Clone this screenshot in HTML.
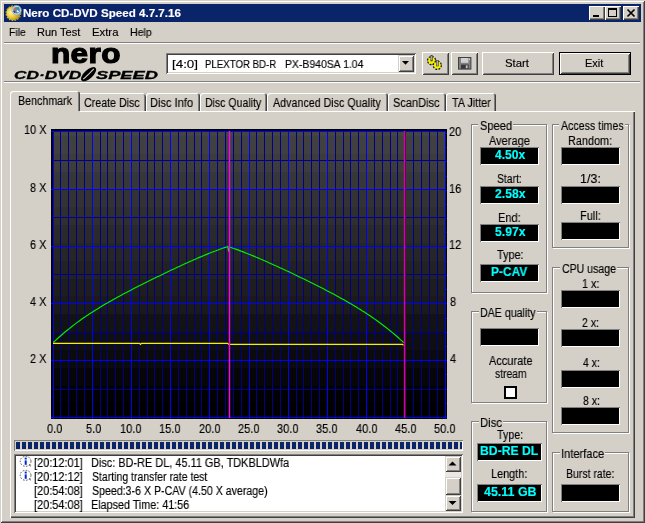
<!DOCTYPE html>
<html lang="en"><head><meta charset="utf-8"><title>Nero CD-DVD Speed 4.7.7.16</title>
<style>
html,body{margin:0;padding:0}
body{width:645px;height:523px;overflow:hidden;background:#d4d0c8;position:relative;font-family:"Liberation Sans",sans-serif;font-size:11px;color:#000}
.a{position:absolute;box-sizing:border-box}
.t{white-space:nowrap;height:16px;line-height:16px;transform-origin:0 50%;will-change:transform;-webkit-text-stroke:0.15px currentColor}
</style></head>
<body>
<div class="a " style="left:0px;top:0px;width:645px;height:523px;background:#d4d0c8;box-shadow:inset 1px 1px 0 #d4d0c8, inset -1px -1px 0 #404040, inset 2px 2px 0 #fff, inset -2px -2px 0 #808080"></div>
<div class="a " style="left:4px;top:4px;width:637px;height:18px;background:#0a246a"></div>
<svg class="a" style="left:5px;top:4px" width="18" height="18" viewBox="0 0 18 18">
<defs><radialGradient id="g1" cx="0.35" cy="0.45" r="0.7"><stop offset="0" stop-color="#fff8b0"/><stop offset="0.45" stop-color="#ecd040"/><stop offset="1" stop-color="#a88810"/></radialGradient></defs>
<circle cx="8.4" cy="9.2" r="7.3" fill="none" stroke="#d8b820" stroke-width="1.2" stroke-dasharray="1.6 1.3"/>
<circle cx="8.4" cy="9.2" r="7" fill="url(#g1)"/>
<circle cx="11.6" cy="6.3" r="4.7" fill="#d8dce4" stroke="#9098a8" stroke-width="0.7"/>
<circle cx="11.6" cy="6.3" r="3.3" fill="#2890e0"/>
<path d="M9.2 4.2 L12 6.6" stroke="#f06020" stroke-width="1.5"/>
<path d="M12 6.6 L13.6 8" stroke="#fff" stroke-width="1.5"/>
<path d="M8.8 7 L9.8 8.6" stroke="#a01010" stroke-width="1.4"/>
<path d="M12.6 3.6 L14 4.6" stroke="#30a030" stroke-width="1.3"/>
</svg>
<div class="a t" style="left:23px;top:5px;font-size:11px;transform:scaleX(1.0540);font-weight:bold;color:#fff;">Nero CD-DVD Speed 4.7.7.16</div>
<div class="a " style="left:589px;top:6px;width:16px;height:14px;background:#d4d0c8;box-shadow:inset 1px 1px 0 #fff, inset -1px -1px 0 #404040, inset -2px -2px 0 #808080"></div>
<div class="a " style="left:605px;top:6px;width:16px;height:14px;background:#d4d0c8;box-shadow:inset 1px 1px 0 #fff, inset -1px -1px 0 #404040, inset -2px -2px 0 #808080"></div>
<div class="a " style="left:623px;top:6px;width:16px;height:14px;background:#d4d0c8;box-shadow:inset 1px 1px 0 #fff, inset -1px -1px 0 #404040, inset -2px -2px 0 #808080"></div>
<div class="a " style="left:593px;top:15px;width:6px;height:2px;background:#000"></div>
<div class="a " style="left:608px;top:8px;width:9px;height:9px;border:1px solid #000;border-top:2px solid #000"></div>
<svg class="a" style="left:623px;top:6px" width="16" height="14" viewBox="0 0 16 14"><path d="M4.5 3.5 L11.5 10.5 M11.5 3.5 L4.5 10.5" stroke="#000" stroke-width="1.7" fill="none"/></svg>
<div class="a t" style="left:9px;top:24px;font-size:11px;transform:scaleX(0.9518);">File</div>
<div class="a t" style="left:37px;top:24px;font-size:11px;transform:scaleX(1.0001);">Run Test</div>
<div class="a t" style="left:92px;top:24px;font-size:11px;transform:scaleX(1.0298);">Extra</div>
<div class="a t" style="left:130px;top:24px;font-size:11px;transform:scaleX(0.9631);">Help</div>
<div class="a " style="left:4px;top:42px;width:636px;height:1px;background:#808080"></div>
<div class="a " style="left:4px;top:43px;width:636px;height:1px;background:#fff"></div>
<div class="a " style="left:4px;top:81px;width:636px;height:1px;background:#808080"></div>
<div class="a " style="left:4px;top:82px;width:636px;height:1px;background:#fff"></div>
<div class="a t" style="left:51.35px;top:33.12px;height:40px;line-height:40px;font-size:28.5px;font-weight:bold;transform:scaleX(1.1079);-webkit-text-stroke:1.2px #000;letter-spacing:0.3px;">nero</div>
<div class="a t" style="left:13.62px;top:54.69px;height:40px;line-height:40px;font-size:11px;font-weight:bold;font-style:italic;transform:scaleX(1.5704);-webkit-text-stroke:0.3px #000;">CD·DVD</div>
<div class="a t" style="left:96.42px;top:54.69px;height:40px;line-height:40px;font-size:11px;font-weight:bold;font-style:italic;transform:scaleX(1.6583);-webkit-text-stroke:0.3px #000;">SPEED</div>
<svg class="a" style="left:79px;top:66px" width="20" height="16" viewBox="0 0 20 16"><ellipse cx="9.6" cy="8.2" rx="9.4" ry="4.3" transform="rotate(-42 9.6 8.2)" fill="#000"/><path d="M4.2 13.2 Q8.5 9.5 14.8 2.8" stroke="#d4d0c8" stroke-width="1.1" fill="none"/></svg>
<div class="a " style="left:166px;top:53px;width:250px;height:21px;background:#fff;box-shadow:inset 1px 1px 0 #808080, inset -1px -1px 0 #fff, inset 2px 2px 0 #404040, inset -2px -2px 0 #d4d0c8"></div>
<div class="a" style="left:0;top:0">
<div class="a t" style="left:172px;top:56px;font-size:11px;transform:scaleX(1.2155);">[4:0]</div>
   
<div class="a t" style="left:205px;top:56px;font-size:11px;transform:scaleX(0.8777);">PLEXTOR BD-R</div>
   
<div class="a t" style="left:285px;top:56px;font-size:11px;transform:scaleX(0.9496);">PX-B940SA 1.04</div>
</div>
<div class="a " style="left:398px;top:55px;width:16px;height:17px;background:#d4d0c8;box-shadow:inset 1px 1px 0 #d4d0c8, inset -1px -1px 0 #404040, inset 2px 2px 0 #fff, inset -2px -2px 0 #808080"></div>
<svg class="a" style="left:398px;top:55px" width="16" height="17" viewBox="0 0 16 17"><path d="M4 6 L11 6 L7.5 9.8 Z" fill="#000"/></svg>
<div class="a " style="left:422px;top:52px;width:27px;height:23px;background:#d4d0c8;box-shadow:inset 1px 1px 0 #fff, inset -1px -1px 0 #404040, inset 2px 2px 0 #d4d0c8, inset -2px -2px 0 #808080"></div>
<div class="a " style="left:451px;top:52px;width:27px;height:23px;background:#d4d0c8;box-shadow:inset 1px 1px 0 #fff, inset -1px -1px 0 #404040, inset 2px 2px 0 #d4d0c8, inset -2px -2px 0 #808080"></div>
<svg class="a" style="left:424px;top:53px" width="24" height="21" viewBox="0 0 24 21">
<g fill="#f4f000" stroke="#181800" stroke-width="1.1"><circle cx="7.6" cy="7.6" r="3.6" stroke-dasharray="1.7 1.1" stroke-width="2.2"/><circle cx="7.6" cy="7.6" r="3.4" stroke="none"/>
<circle cx="13.3" cy="12.3" r="3.6" stroke-dasharray="1.7 1.1" stroke-width="2.2"/><circle cx="13.3" cy="12.3" r="3.4" stroke="none"/></g>
<rect x="6.8" y="2.4" width="1.8" height="5.6" fill="#b0b0b8" stroke="#404040" stroke-width="0.6"/>
<rect x="12.5" y="7.4" width="1.8" height="5.6" fill="#b0b0b8" stroke="#404040" stroke-width="0.6"/>
</svg>
<svg class="a" style="left:458px;top:57px" width="14" height="13" viewBox="0 0 14 13">
<rect x="0.5" y="0.5" width="12.4" height="11.6" fill="#808080" stroke="#404040"/>
<rect x="3" y="1" width="7.4" height="4.8" fill="#d0d0d0"/>
<rect x="3" y="7.6" width="7.6" height="4.2" fill="#383838"/>
<rect x="7.8" y="8.4" width="1.8" height="2.8" fill="#c8c8c8"/>
<rect x="11" y="1.6" width="1" height="1.4" fill="#d8d8d8"/>
</svg>
<div class="a " style="left:482px;top:52px;width:72px;height:23px;background:#d4d0c8;box-shadow:inset 1px 1px 0 #fff, inset -1px -1px 0 #404040, inset 2px 2px 0 #d4d0c8, inset -2px -2px 0 #808080"></div>
<div class="a t" style="left:505px;top:55px;font-size:11px;transform:scaleX(1.0346);">Start</div>
<div class="a " style="left:559px;top:52px;width:72px;height:23px;background:#000"></div>
<div class="a " style="left:560px;top:53px;width:70px;height:21px;background:#d4d0c8;box-shadow:inset 1px 1px 0 #fff, inset -1px -1px 0 #404040, inset 2px 2px 0 #d4d0c8, inset -2px -2px 0 #808080"></div>
<div class="a t" style="left:585px;top:55px;font-size:11px;transform:scaleX(0.9980);">Exit</div>
<div class="a " style="left:10px;top:111px;width:625px;height:407px;background:#d4d0c8;box-shadow:inset 1px 1px 0 #fff, inset -1px -1px 0 #404040, inset -2px -2px 0 #808080"></div>
<div class="a " style="left:10px;top:91px;width:70px;height:21px;background:#d4d0c8;border-radius:3px 3px 0 0;box-shadow:inset 1px 1px 0 #fff, inset -1px 0 0 #404040, inset -2px 0 0 #808080"></div>
<div class="a " style="left:11px;top:111px;width:69px;height:1px;background:#d4d0c8"></div>
<div class="a t" style="left:18px;top:93px;font-size:12.5px;transform:scaleX(0.8546);">Benchmark</div>
<div class="a " style="left:80px;top:93px;width:66px;height:18px;background:#d4d0c8;border-radius:0 3px 0 0;box-shadow:inset 0 1px 0 #fff, inset -1px 0 0 #404040, inset -2px 0 0 #808080"></div>
<div class="a t" style="left:84px;top:95px;font-size:12.5px;transform:scaleX(0.8528);">Create Disc</div>
<div class="a " style="left:146px;top:93px;width:54px;height:18px;background:#d4d0c8;border-radius:3px 3px 0 0;box-shadow:inset 1px 1px 0 #fff, inset -1px 0 0 #404040, inset -2px 0 0 #808080"></div>
<div class="a t" style="left:150px;top:95px;font-size:12.5px;transform:scaleX(0.8849);">Disc Info</div>
<div class="a " style="left:200px;top:93px;width:67px;height:18px;background:#d4d0c8;border-radius:3px 3px 0 0;box-shadow:inset 1px 1px 0 #fff, inset -1px 0 0 #404040, inset -2px 0 0 #808080"></div>
<div class="a t" style="left:205px;top:95px;font-size:12.5px;transform:scaleX(0.8419);">Disc Quality</div>
<div class="a " style="left:267px;top:93px;width:121px;height:18px;background:#d4d0c8;border-radius:3px 3px 0 0;box-shadow:inset 1px 1px 0 #fff, inset -1px 0 0 #404040, inset -2px 0 0 #808080"></div>
<div class="a t" style="left:273px;top:95px;font-size:12.5px;transform:scaleX(0.8573);">Advanced Disc Quality</div>
<div class="a " style="left:388px;top:93px;width:58px;height:18px;background:#d4d0c8;border-radius:3px 3px 0 0;box-shadow:inset 1px 1px 0 #fff, inset -1px 0 0 #404040, inset -2px 0 0 #808080"></div>
<div class="a t" style="left:393px;top:95px;font-size:12.5px;transform:scaleX(0.8818);">ScanDisc</div>
<div class="a " style="left:446px;top:93px;width:50px;height:18px;background:#d4d0c8;border-radius:3px 3px 0 0;box-shadow:inset 1px 1px 0 #fff, inset -1px 0 0 #404040, inset -2px 0 0 #808080"></div>
<div class="a t" style="left:452px;top:95px;font-size:12.5px;transform:scaleX(0.8652);">TA Jitter</div>
<svg class="a" style="left:0;top:0" width="645" height="523" viewBox="0 0 645 523">
<defs><linearGradient id="cg" x1="0" y1="0" x2="0" y2="1"><stop offset="0" stop-color="#424242"/><stop offset="1" stop-color="#000000"/></linearGradient></defs>
<rect x="51" y="129" width="396" height="290" fill="#000"/>
<rect x="53" y="131" width="393" height="5" fill="#444444" shape-rendering="crispEdges"/>
<rect x="53" y="136" width="393" height="18" fill="#404040" shape-rendering="crispEdges"/>
<rect x="53" y="154" width="393" height="18" fill="#3c3c3c" shape-rendering="crispEdges"/>
<rect x="53" y="172" width="393" height="17" fill="#373737" shape-rendering="crispEdges"/>
<rect x="53" y="189" width="393" height="18" fill="#333333" shape-rendering="crispEdges"/>
<rect x="53" y="207" width="393" height="18" fill="#2f2f2f" shape-rendering="crispEdges"/>
<rect x="53" y="225" width="393" height="18" fill="#2a2a2a" shape-rendering="crispEdges"/>
<rect x="53" y="243" width="393" height="18" fill="#262626" shape-rendering="crispEdges"/>
<rect x="53" y="261" width="393" height="18" fill="#222222" shape-rendering="crispEdges"/>
<rect x="53" y="279" width="393" height="17" fill="#1e1e1e" shape-rendering="crispEdges"/>
<rect x="53" y="296" width="393" height="18" fill="#1a1a1a" shape-rendering="crispEdges"/>
<rect x="53" y="314" width="393" height="18" fill="#131313" shape-rendering="crispEdges"/>
<rect x="53" y="332" width="393" height="18" fill="#0f0f0f" shape-rendering="crispEdges"/>
<rect x="53" y="350" width="393" height="18" fill="#0b0b0b" shape-rendering="crispEdges"/>
<rect x="53" y="368" width="393" height="18" fill="#060606" shape-rendering="crispEdges"/>
<rect x="53" y="386" width="393" height="17" fill="#020202" shape-rendering="crispEdges"/>
<rect x="53" y="403" width="393" height="15" fill="#000000" shape-rendering="crispEdges"/>
<path d="M60 131h1v288h-1zM68 131h1v288h-1zM76 131h1v288h-1zM84 131h1v288h-1zM100 131h1v288h-1zM107 131h1v288h-1zM115 131h1v288h-1zM123 131h1v288h-1zM139 131h1v288h-1zM147 131h1v288h-1zM154 131h1v288h-1zM162 131h1v288h-1zM178 131h1v288h-1zM186 131h1v288h-1zM194 131h1v288h-1zM201 131h1v288h-1zM217 131h1v288h-1zM225 131h1v288h-1zM233 131h1v288h-1zM241 131h1v288h-1zM256 131h1v288h-1zM264 131h1v288h-1zM272 131h1v288h-1zM280 131h1v288h-1zM296 131h1v288h-1zM303 131h1v288h-1zM311 131h1v288h-1zM319 131h1v288h-1zM335 131h1v288h-1zM343 131h1v288h-1zM350 131h1v288h-1zM358 131h1v288h-1zM374 131h1v288h-1zM382 131h1v288h-1zM390 131h1v288h-1zM397 131h1v288h-1zM413 131h1v288h-1zM421 131h1v288h-1zM429 131h1v288h-1zM437 131h1v288h-1zM53 160h393v1h-393zM53 217h393v1h-393zM53 274h393v1h-393zM53 332h393v1h-393zM53 389h393v1h-393z" fill="#000088" shape-rendering="crispEdges"/>
<path d="M53 131h1v288h-1zM92 131h1v288h-1zM131 131h1v288h-1zM170 131h1v288h-1zM209 131h1v288h-1zM249 131h1v288h-1zM288 131h1v288h-1zM327 131h1v288h-1zM366 131h1v288h-1zM405 131h1v288h-1zM445 131h1v288h-1zM51 131h395v1h-395zM51 189h395v1h-395zM51 246h395v1h-395zM51 303h395v1h-395zM51 360h395v1h-395zM51 417h396v1h-396z" fill="#0000ff" shape-rendering="crispEdges"/>
<path d="M446 133h1v1h-1zM446 147h1v1h-1zM446 161h1v1h-1zM446 176h1v1h-1zM446 190h1v1h-1zM446 204h1v1h-1zM446 218h1v1h-1zM446 232h1v1h-1zM446 247h1v1h-1zM446 261h1v1h-1zM446 275h1v1h-1zM446 289h1v1h-1zM446 303h1v1h-1zM446 318h1v1h-1zM446 332h1v1h-1zM446 346h1v1h-1zM446 360h1v1h-1zM446 374h1v1h-1zM446 389h1v1h-1zM446 403h1v1h-1z" fill="#0000ff" shape-rendering="crispEdges"/>
<polyline points="53.3,342.5 55.3,340.6 57.3,338.8 59.3,337.0 61.3,335.2 63.3,333.5 65.3,331.8 67.3,330.2 69.3,328.6 71.3,327.0 73.3,325.4 75.3,323.9 77.3,322.4 79.3,321.0 81.3,319.5 83.3,318.1 85.3,316.8 87.3,315.4 89.3,314.1 91.3,312.8 93.3,311.5 95.3,310.2 97.3,309.0 99.3,307.7 101.3,306.5 103.3,305.3 105.3,304.1 107.3,303.0 109.3,301.8 111.3,300.7 113.3,299.5 115.3,298.4 117.3,297.3 119.3,296.2 121.3,295.2 123.3,294.1 125.3,293.0 127.3,292.0 129.3,290.9 131.3,289.9 133.3,288.8 135.3,287.8 137.3,286.8 139.3,285.8 141.3,284.8 143.3,283.7 145.3,282.7 147.3,281.7 149.3,280.8 151.3,279.8 153.3,278.8 155.3,277.8 157.3,276.8 159.3,275.9 161.3,274.9 163.3,273.9 165.3,273.0 167.3,272.0 169.3,271.1 171.3,270.1 173.3,269.2 175.3,268.2 177.3,267.3 179.3,266.4 181.3,265.5 183.3,264.5 185.3,263.6 187.3,262.7 189.3,261.8 191.3,260.9 193.3,260.0 195.3,259.2 197.3,258.3 199.3,257.4 201.3,256.6 203.3,255.7 205.3,254.9 207.3,254.1 209.3,253.3 211.3,252.5 213.3,251.7 215.3,251.0 217.3,250.2 219.3,249.5 221.3,248.7 223.3,248.0 225.3,247.4 227.3,246.7 227.8,246.4 228.6,251.6 229.6,246.8 230.4,247.3 232.4,248.0 234.4,248.7 236.4,249.4 238.4,250.1 240.4,250.9 242.4,251.6 244.4,252.4 246.4,253.2 248.4,254.0 250.4,254.8 252.4,255.6 254.4,256.4 256.4,257.3 258.4,258.1 260.4,259.0 262.4,259.8 264.4,260.7 266.4,261.6 268.4,262.5 270.4,263.4 272.4,264.3 274.4,265.2 276.4,266.1 278.4,267.0 280.4,267.9 282.4,268.8 284.4,269.8 286.4,270.7 288.4,271.6 290.4,272.6 292.4,273.5 294.4,274.5 296.4,275.4 298.4,276.4 300.4,277.4 302.4,278.3 304.4,279.3 306.4,280.3 308.4,281.3 310.4,282.2 312.4,283.2 314.4,284.2 316.4,285.2 318.4,286.3 320.4,287.3 322.4,288.3 324.4,289.3 326.4,290.4 328.4,291.4 330.4,292.5 332.4,293.5 334.4,294.6 336.4,295.7 338.4,296.8 340.4,297.9 342.4,299.0 344.4,300.1 346.4,301.2 348.4,302.4 350.4,303.6 352.4,304.7 354.4,305.9 356.4,307.1 358.4,308.4 360.4,309.6 362.4,310.9 364.4,312.1 366.4,313.4 368.4,314.8 370.4,316.1 372.4,317.5 374.4,318.9 376.4,320.3 378.4,321.7 380.4,323.2 382.4,324.7 384.4,326.2 386.4,327.8 388.4,329.4 390.4,331.0 392.4,332.6 394.4,334.3 396.4,336.0 398.4,337.8 400.4,339.6 402.4,341.4 403.6,342.6" stroke="#00f000" stroke-width="1.15" fill="none"/>
<polyline points="53,343.3 139.5,343.3 140.5,344.3 141.5,343.3 227.5,343.3 229,344.4 402.5,344.4 403.5,345.3" stroke="#f4f400" stroke-width="1.2" fill="none"/>
<rect x="228.8" y="131" width="1.4" height="287" fill="#ff00ff"/>
<rect x="403.8" y="131" width="1.4" height="287" fill="#ff0038"/>
</svg>
<div class="a t" style="left:24px;top:122px;font-size:12.5px;transform:scaleX(0.8700);">10 X</div>
<div class="a t" style="left:30px;top:180px;font-size:12.5px;transform:scaleX(0.8700);">8 X</div>
<div class="a t" style="left:30px;top:237px;font-size:12.5px;transform:scaleX(0.8700);">6 X</div>
<div class="a t" style="left:30px;top:294px;font-size:12.5px;transform:scaleX(0.8700);">4 X</div>
<div class="a t" style="left:30px;top:351px;font-size:12.5px;transform:scaleX(0.8700);">2 X</div>
<div class="a t" style="left:449px;top:124px;font-size:12.5px;transform:scaleX(0.8800);">20</div>
<div class="a t" style="left:449px;top:181px;font-size:12.5px;transform:scaleX(0.8800);">16</div>
<div class="a t" style="left:449px;top:237px;font-size:12.5px;transform:scaleX(0.8800);">12</div>
<div class="a t" style="left:450px;top:294px;font-size:12.5px;transform:scaleX(0.8800);">8</div>
<div class="a t" style="left:450px;top:351px;font-size:12.5px;transform:scaleX(0.8800);">4</div>
<div class="a t" style="left:47px;top:421px;font-size:12.5px;transform:scaleX(0.8800);">0.0</div>
<div class="a t" style="left:86px;top:421px;font-size:12.5px;transform:scaleX(0.8800);">5.0</div>
<div class="a t" style="left:120px;top:421px;font-size:12.5px;transform:scaleX(0.8800);">10.0</div>
<div class="a t" style="left:159px;top:421px;font-size:12.5px;transform:scaleX(0.8800);">15.0</div>
<div class="a t" style="left:199px;top:421px;font-size:12.5px;transform:scaleX(0.8800);">20.0</div>
<div class="a t" style="left:238px;top:421px;font-size:12.5px;transform:scaleX(0.8800);">25.0</div>
<div class="a t" style="left:277px;top:421px;font-size:12.5px;transform:scaleX(0.8800);">30.0</div>
<div class="a t" style="left:316px;top:421px;font-size:12.5px;transform:scaleX(0.8800);">35.0</div>
<div class="a t" style="left:356px;top:421px;font-size:12.5px;transform:scaleX(0.8800);">40.0</div>
<div class="a t" style="left:395px;top:421px;font-size:12.5px;transform:scaleX(0.8800);">45.0</div>
<div class="a t" style="left:434px;top:421px;font-size:12.5px;transform:scaleX(0.8800);">50.0</div>
<div class="a " style="left:14px;top:440px;width:449px;height:11px;background:#d4d0c8;box-shadow:inset 1px 1px 0 #808080, inset -1px -1px 0 #fff"></div>
<div class="a " style="left:16px;top:442px;width:445.5px;height:7px;background:repeating-linear-gradient(90deg,#0a246a 0,#0a246a 4px,transparent 4px,transparent 6px)"></div>
<div class="a " style="left:14px;top:454px;width:449px;height:59px;background:#fff;box-shadow:inset 1px 1px 0 #808080, inset -1px -1px 0 #fff, inset 2px 2px 0 #404040, inset -2px -2px 0 #d4d0c8"></div>
<div class="a t" style="left:34px;top:455px;font-size:12.5px;transform:scaleX(0.8761);">[20:12:01]</div>
<div class="a t" style="left:91px;top:455px;font-size:12.5px;transform:scaleX(0.8740);">Disc: BD-RE DL, 45.11 GB, TDKBLDWfa</div>
<svg class="a" style="left:19px;top:455.0px" width="14" height="14" viewBox="0 0 14 14"><path d="M9 9.5 L12.2 12 L10.8 8 Z" fill="#606060"/><ellipse cx="6.6" cy="6.3" rx="5.4" ry="5" fill="#fff" stroke="#505050" stroke-width="1" stroke-dasharray="1.6 1.4"/><rect x="5.7" y="5.4" width="2" height="4.4" fill="#0028d0"/><rect x="5.7" y="2.6" width="2" height="1.9" fill="#0028d0"/></svg>
<div class="a t" style="left:34px;top:469px;font-size:12.5px;transform:scaleX(0.8761);">[20:12:12]</div>
<div class="a t" style="left:92px;top:469px;font-size:12.5px;transform:scaleX(0.8383);">Starting transfer rate test</div>
<svg class="a" style="left:19px;top:469.0px" width="14" height="14" viewBox="0 0 14 14"><path d="M9 9.5 L12.2 12 L10.8 8 Z" fill="#606060"/><ellipse cx="6.6" cy="6.3" rx="5.4" ry="5" fill="#fff" stroke="#505050" stroke-width="1" stroke-dasharray="1.6 1.4"/><rect x="5.7" y="5.4" width="2" height="4.4" fill="#0028d0"/><rect x="5.7" y="2.6" width="2" height="1.9" fill="#0028d0"/></svg>
<div class="a t" style="left:34px;top:483px;font-size:12.5px;transform:scaleX(0.8761);">[20:54:08]</div>
<div class="a t" style="left:92px;top:483px;font-size:12.5px;transform:scaleX(0.8489);">Speed:3-6 X P-CAV (4.50 X average)</div>
<div class="a t" style="left:34px;top:497px;font-size:12.5px;transform:scaleX(0.8761);">[20:54:08]</div>
<div class="a t" style="left:91px;top:497px;font-size:12.5px;transform:scaleX(0.8618);">Elapsed Time: 41:56</div>
<div class="a " style="left:445px;top:456px;width:16px;height:55px;background:#eae8e4"></div>
<div class="a " style="left:445px;top:456px;width:16px;height:16px;background:#d4d0c8;box-shadow:inset 1px 1px 0 #d4d0c8, inset -1px -1px 0 #404040, inset 2px 2px 0 #fff, inset -2px -2px 0 #808080"></div>
<div class="a " style="left:445px;top:495px;width:16px;height:16px;background:#d4d0c8;box-shadow:inset 1px 1px 0 #d4d0c8, inset -1px -1px 0 #404040, inset 2px 2px 0 #fff, inset -2px -2px 0 #808080"></div>
<div class="a " style="left:445px;top:477px;width:16px;height:18px;background:#d4d0c8;box-shadow:inset 1px 1px 0 #d4d0c8, inset -1px -1px 0 #404040, inset 2px 2px 0 #fff, inset -2px -2px 0 #808080"></div>
<svg class="a" style="left:445px;top:456px" width="16" height="16" viewBox="0 0 16 16"><path d="M3.5 9.6 L11.5 9.6 L7.5 5.6 Z" fill="#000"/></svg>
<svg class="a" style="left:445px;top:495px" width="16" height="16" viewBox="0 0 16 16"><path d="M3.5 6 L11.5 6 L7.5 10 Z" fill="#000"/></svg>
<div class="a " style="left:472px;top:125px;width:76px;height:169px;border:1px solid #fff"></div>
<div class="a " style="left:471px;top:124px;width:76px;height:169px;border:1px solid #808080"></div>
<div class="a " style="left:478.4px;top:124px;width:34.900000000000034px;height:2px;background:#d4d0c8"></div>
<div class="a t" style="left:480px;top:118px;font-size:12.5px;transform:scaleX(0.8876);">Speed</div>
<div class="a t" style="left:489px;top:133px;font-size:12.5px;transform:scaleX(0.8819);">Average</div>
<div class="a " style="left:480px;top:147px;width:59px;height:18px;background:#000;box-shadow:inset 1px 1px 0 #808080, inset -1px -1px 0 #fff"></div>
<div class="a t" style="left:495px;top:147px;font-size:12px;transform:scaleX(1.0081);font-weight:bold;color:#00ffff;">4.50x</div>
<div class="a t" style="left:497px;top:171px;font-size:12.5px;transform:scaleX(0.8302);">Start:</div>
<div class="a " style="left:480px;top:186px;width:59px;height:18px;background:#000;box-shadow:inset 1px 1px 0 #808080, inset -1px -1px 0 #fff"></div>
<div class="a t" style="left:495px;top:186px;font-size:12px;transform:scaleX(1.0142);font-weight:bold;color:#00ffff;">2.58x</div>
<div class="a t" style="left:498px;top:210px;font-size:12.5px;transform:scaleX(0.8847);">End:</div>
<div class="a " style="left:480px;top:224px;width:59px;height:18px;background:#000;box-shadow:inset 1px 1px 0 #808080, inset -1px -1px 0 #fff"></div>
<div class="a t" style="left:495px;top:224px;font-size:12px;transform:scaleX(1.0142);font-weight:bold;color:#00ffff;">5.97x</div>
<div class="a t" style="left:497px;top:247px;font-size:12.5px;transform:scaleX(0.8684);">Type:</div>
<div class="a " style="left:480px;top:264px;width:59px;height:18px;background:#000;box-shadow:inset 1px 1px 0 #808080, inset -1px -1px 0 #fff"></div>
<div class="a t" style="left:491px;top:264px;font-size:12px;transform:scaleX(0.9921);font-weight:bold;color:#00ffff;">P-CAV</div>
<div class="a " style="left:553px;top:125px;width:77px;height:124px;border:1px solid #fff"></div>
<div class="a " style="left:552px;top:124px;width:77px;height:124px;border:1px solid #808080"></div>
<div class="a " style="left:559.2px;top:124px;width:66.19999999999993px;height:2px;background:#d4d0c8"></div>
<div class="a t" style="left:561px;top:118px;font-size:12.5px;transform:scaleX(0.8499);">Access times</div>
<div class="a t" style="left:568px;top:133px;font-size:12.5px;transform:scaleX(0.8699);">Random:</div>
<div class="a " style="left:561px;top:147px;width:59px;height:18px;background:#000;box-shadow:inset 1px 1px 0 #808080, inset -1px -1px 0 #fff"></div>
<div class="a t" style="left:580px;top:171px;font-size:12.5px;transform:scaleX(0.9940);">1/3:</div>
<div class="a " style="left:561px;top:186px;width:59px;height:18px;background:#000;box-shadow:inset 1px 1px 0 #808080, inset -1px -1px 0 #fff"></div>
<div class="a t" style="left:580px;top:208px;font-size:12.5px;transform:scaleX(0.8800);">Full:</div>
<div class="a " style="left:561px;top:222px;width:59px;height:18px;background:#000;box-shadow:inset 1px 1px 0 #808080, inset -1px -1px 0 #fff"></div>
<div class="a " style="left:472px;top:312px;width:76px;height:92px;border:1px solid #fff"></div>
<div class="a " style="left:471px;top:311px;width:76px;height:92px;border:1px solid #808080"></div>
<div class="a " style="left:478.8px;top:311px;width:58.69999999999999px;height:2px;background:#d4d0c8"></div>
<div class="a t" style="left:480px;top:305px;font-size:12.5px;transform:scaleX(0.8505);">DAE quality</div>
<div class="a " style="left:480px;top:328px;width:59px;height:18px;background:#000;box-shadow:inset 1px 1px 0 #808080, inset -1px -1px 0 #fff"></div>
<div class="a t" style="left:489px;top:353px;font-size:12.5px;transform:scaleX(0.8809);">Accurate</div>
<div class="a t" style="left:495px;top:366px;font-size:12.5px;transform:scaleX(0.8269);">stream</div>
<div class="a " style="left:504px;top:386px;width:13px;height:13px;background:#fff;border:2px solid #000"></div>
<div class="a " style="left:553px;top:268px;width:77px;height:166px;border:1px solid #fff"></div>
<div class="a " style="left:552px;top:267px;width:77px;height:166px;border:1px solid #808080"></div>
<div class="a " style="left:560.2px;top:267px;width:57.09999999999991px;height:2px;background:#d4d0c8"></div>
<div class="a t" style="left:562px;top:261px;font-size:12.5px;transform:scaleX(0.8454);">CPU usage</div>
<div class="a t" style="left:582px;top:276px;font-size:12.5px;transform:scaleX(0.8607);">1 x:</div>
<div class="a " style="left:561px;top:290px;width:59px;height:18px;background:#000;box-shadow:inset 1px 1px 0 #808080, inset -1px -1px 0 #fff"></div>
<div class="a t" style="left:582px;top:315px;font-size:12.5px;transform:scaleX(0.8461);">2 x:</div>
<div class="a " style="left:561px;top:329px;width:59px;height:18px;background:#000;box-shadow:inset 1px 1px 0 #808080, inset -1px -1px 0 #fff"></div>
<div class="a t" style="left:583px;top:355px;font-size:12.5px;transform:scaleX(0.8292);">4 x:</div>
<div class="a " style="left:561px;top:370px;width:59px;height:18px;background:#000;box-shadow:inset 1px 1px 0 #808080, inset -1px -1px 0 #fff"></div>
<div class="a t" style="left:583px;top:393px;font-size:12.5px;transform:scaleX(0.8404);">8 x:</div>
<div class="a " style="left:561px;top:407px;width:59px;height:18px;background:#000;box-shadow:inset 1px 1px 0 #808080, inset -1px -1px 0 #fff"></div>
<div class="a " style="left:472px;top:422px;width:76px;height:91px;border:1px solid #fff"></div>
<div class="a " style="left:471px;top:421px;width:76px;height:91px;border:1px solid #808080"></div>
<div class="a " style="left:478.5px;top:421px;width:24.899999999999977px;height:2px;background:#d4d0c8"></div>
<div class="a t" style="left:480px;top:415px;font-size:12.5px;transform:scaleX(0.9087);">Disc</div>
<div class="a t" style="left:497px;top:427px;font-size:12.5px;transform:scaleX(0.8547);">Type:</div>
<div class="a " style="left:477px;top:443px;width:65px;height:18px;background:#000;box-shadow:inset 1px 1px 0 #808080, inset -1px -1px 0 #fff"></div>
<div class="a t" style="left:480px;top:443px;font-size:12px;transform:scaleX(1.0174);font-weight:bold;color:#00ffff;">BD-RE DL</div>
<div class="a t" style="left:491px;top:466px;font-size:12.5px;transform:scaleX(0.8707);">Length:</div>
<div class="a " style="left:477px;top:484px;width:65px;height:18px;background:#000;box-shadow:inset 1px 1px 0 #808080, inset -1px -1px 0 #fff"></div>
<div class="a t" style="left:484px;top:484px;font-size:12px;transform:scaleX(1.0372);font-weight:bold;color:#00ffff;">45.11 GB</div>
<div class="a " style="left:553px;top:453px;width:77px;height:60px;border:1px solid #fff"></div>
<div class="a " style="left:552px;top:452px;width:77px;height:60px;border:1px solid #808080"></div>
<div class="a " style="left:559.6px;top:452px;width:45.69999999999993px;height:2px;background:#d4d0c8"></div>
<div class="a t" style="left:561px;top:446px;font-size:12.5px;transform:scaleX(0.8872);">Interface</div>
<div class="a t" style="left:566px;top:466px;font-size:12.5px;transform:scaleX(0.8387);">Burst rate:</div>
<div class="a " style="left:561px;top:484px;width:59px;height:18px;background:#000;box-shadow:inset 1px 1px 0 #808080, inset -1px -1px 0 #fff"></div>
</body></html>
